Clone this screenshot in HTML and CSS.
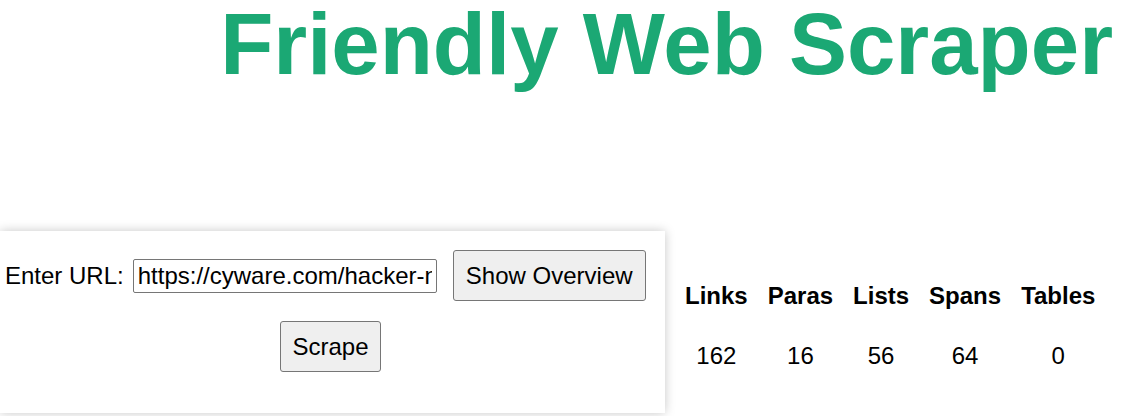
FILE: index.html
```html
<!DOCTYPE html>
<html lang="en">
<head>
<meta charset="utf-8">
<title>Friendly Web Scraper</title>
<link rel="stylesheet" href="styles.css">
</head>
<body>
<header class="header">
  <h1 class="title">Friendly Web Scraper</h1>
</header>
<main class="main">
  <section class="card">
    <div class="url-row">
      <label class="url-label" for="url">Enter URL:</label>
      <input class="url-input" id="url" type="text" value="https://cyware.com/hacker-news">
      <button class="btn btn-overview" type="button">Show Overview</button>
    </div>
    <div class="scrape-row">
      <button class="btn btn-scrape" type="button">Scrape</button>
    </div>
  </section>
  <table class="stats">
    <thead>
      <tr><th>Links</th><th>Paras</th><th>Lists</th><th>Spans</th><th>Tables</th></tr>
    </thead>
    <tbody>
      <tr><td>162</td><td>16</td><td>56</td><td>64</td><td>0</td></tr>
    </tbody>
  </table>
</main>
</body>
</html>
```

FILE: styles.css
```css
html, body {
  margin: 0;
  padding: 0;
  background: #ffffff;
  overflow: hidden;
}

body {
  width: 1123px;
  height: 416px;
  font-family: "Liberation Sans", Arial, sans-serif;
  font-size: 24px;
  color: #000000;
}

.header {
  text-align: right;
  padding-right: 10px;
  padding-bottom: 12px;
}

.title {
  margin: 0;
  font-size: 87px;
  line-height: 88px;
  font-weight: bold;
  color: #1ba874;
}

.main {
  display: flex;
  align-items: flex-start;
  gap: 9px;
  margin-top: 131px;
}

.card {
  width: 665px;
  box-sizing: border-box;
  padding: 19px 19px 41px 5px;
  background: #ffffff;
  box-shadow: 0 0 10px rgba(0, 0, 0, 0.22);
  flex: none;
}

.url-row {
  display: flex;
  align-items: center;
}

.url-label {
  font-size: 24px;
}

.url-input {
  margin-left: 9px;
  width: 304px;
  height: 34px;
  box-sizing: border-box;
  padding: 1px 4px;
  border: 1px solid #767676;
  border-radius: 2px;
  font-family: "Liberation Sans", Arial, sans-serif;
  font-size: 24px;
  color: #000000;
}

.btn {
  height: 51px;
  box-sizing: border-box;
  padding: 0 10px;
  border: 1px solid #767676;
  border-radius: 3px;
  background: #efefef;
  font-family: "Liberation Sans", Arial, sans-serif;
  font-size: 24px;
  color: #000000;
}

.btn-overview {
  margin-left: 16px;
  width: 193px;
}

.scrape-row {
  display: flex;
  justify-content: center;
  margin-top: 20px;
  margin-left: -9px;
  margin-right: -19px;
}

.btn-scrape {
  width: 101px;
}

.stats {
  margin-top: 34px;
  border-spacing: 2px;
}

.stats th,
.stats td {
  padding: 15px 9px;
  text-align: center;
  font-size: 24px;
  line-height: 28px;
}

.stats th {
  font-weight: bold;
}
```
